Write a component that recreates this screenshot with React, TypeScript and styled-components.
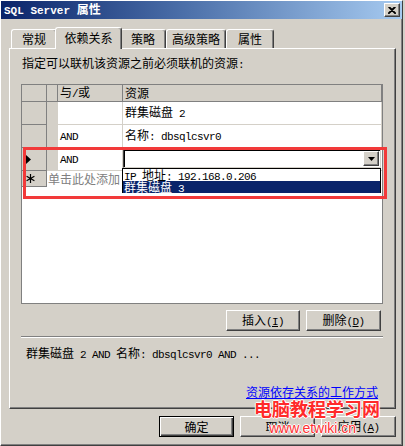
import React from 'react';
import styled, { createGlobalStyle } from 'styled-components';

const GlobalStyle = createGlobalStyle`
  html, body {
    margin: 0;
    padding: 0;
    background: #d4d0c8;
  }
  body {
    font-family: "Noto Sans CJK SC", "Liberation Sans", sans-serif;
    font-size: 12px;
    color: #000;
  }
  * {
    box-sizing: border-box;
  }
`;

const Window = styled.div`
  position: relative;
  width: 403px;
  height: 446px;
  display: flex;
  flex-direction: column;
  background: #d4d0c8;
  border-top: 1px solid #fff;
  border-left: 1px solid #fff;
  border-right: 1px solid #404040;
  border-bottom: 1px solid #404040;
  box-shadow: inset -1px -1px #808080;
`;

const TitleBar = styled.div`
  height: 18px;
  display: flex;
  align-items: center;
  justify-content: space-between;
  padding: 0 2px 0 3px;
  background: linear-gradient(90deg, #0a246a 0%, #4a6ea8 45%, #a6caf0 100%);
  color: #fff;
  font-weight: bold;
  line-height: 16px;
`;

const TitleText = styled.div`
  font-size: 12px;
  font-weight: bold;
  white-space: pre;
`;

const TitleLat = styled.span`
  font-family: "Liberation Mono", "DejaVu Sans Mono", monospace;
  font-size: 11px;
  font-weight: bold;
`;

const CloseButton = styled.div`
  width: 16px;
  height: 14px;
  display: flex;
  align-items: center;
  justify-content: center;
  background: #d4d0c8;
  border-top: 1px solid #fff;
  border-left: 1px solid #fff;
  border-right: 1px solid #404040;
  border-bottom: 1px solid #404040;
  box-shadow: inset -1px -1px #808080;
`;

const Body = styled.div`
  flex: 1;
  display: flex;
  flex-direction: column;
  padding: 8px 6px 0 8px;
`;

const TabRow = styled.div`
  height: 21px;
  display: flex;
  align-items: flex-end;
  padding-left: 2px;
`;

const Tab = styled.div<{ $w: number; $active?: boolean }>`
  position: relative;
  z-index: ${(p) => (p.$active ? 1 : 0)};
  width: ${(p) => (p.$active ? p.$w + 4 : p.$w)}px;
  height: ${(p) => (p.$active ? 22 : 19)}px;
  margin: ${(p) => (p.$active ? '0 -2px -1px' : '0')};
  display: flex;
  justify-content: center;
  align-items: center;
  padding-bottom: ${(p) => (p.$active ? 2 : 0)}px;
  background: #d4d0c8;
  border-top: 1px solid #fff;
  border-left: 1px solid #fff;
  border-right: 1px solid #404040;
  border-radius: 3px 3px 0 0;
  box-shadow: inset -1px 0 #808080;
  line-height: 14px;
  white-space: nowrap;
`;

const Panel = styled.div`
  height: 361px;
  display: flex;
  flex-direction: column;
  padding: 7px 12px 0 11px;
  border-top: 1px solid #fff;
  border-left: 1px solid #fff;
  border-right: 1px solid #404040;
  border-bottom: 1px solid #404040;
  box-shadow: inset -1px -1px #808080;
`;

const Label = styled.div`
  height: 14px;
  line-height: 14px;
  padding-left: 1px;
  white-space: pre;
`;

const Lat = styled.span`
  font-family: "Liberation Mono", "DejaVu Sans Mono", monospace;
  font-size: 11px;
  letter-spacing: -0.6px;
`;

const Grid = styled.div`
  position: relative;
  margin-top: 14px;
  height: 220px;
  border: 1px solid #808080;
  background: #fff;
`;

const Row = styled.div<{ $h: number }>`
  display: flex;
  height: ${(p) => p.$h}px;
`;

const RowHead = styled.div`
  width: 25px;
  flex: none;
  display: flex;
  align-items: center;
  padding-left: 4px;
  background: #d4d0c8;
  border-right: 1px solid #808080;
  border-bottom: 1px solid #808080;
`;

const Strip = styled.div<{ $head?: boolean }>`
  width: 11px;
  flex: none;
  background: #d4d0c8;
  ${(p) => p.$head && 'border-right: 1px solid #808080; border-bottom: 1px solid #808080;'}
`;

const Cell = styled.div<{ $w?: number; $head?: boolean }>`
  position: relative;
  ${(p) => (p.$w ? `width: ${p.$w}px; flex: none;` : 'flex: 1;')}
  display: flex;
  align-items: center;
  padding-left: 2px;
  background: ${(p) => (p.$head ? '#d4d0c8' : '#fff')};
  border-bottom: 1px solid ${(p) => (p.$head ? '#808080' : '#d4d0c8')};
  border-right: 1px solid ${(p) => (p.$head ? '#808080' : '#d4d0c8')};
  line-height: 14px;
  white-space: pre;
`;

const NewCell = styled.div`
  flex: 1;
  display: flex;
  align-items: center;
  padding-left: 1px;
  color: #808080;
  line-height: 14px;
  white-space: nowrap;
`;

const ComboCell = styled.div`
  position: relative;
  flex: 1;
  padding-top: 1px;
  background: #fff;
  border-bottom: 1px solid #d4d0c8;
`;

const Combo = styled.div`
  width: 258px;
  height: 19px;
  display: flex;
  justify-content: flex-end;
  align-items: center;
  padding-right: 1px;
  background: #fff;
  border-top: 1px solid #404040;
  border-left: 1px solid #404040;
  border-right: 1px solid #d4d0c8;
  border-bottom: 1px solid #d4d0c8;
  box-shadow: inset 1px 1px #000;
`;

const ComboButton = styled.div`
  width: 16px;
  height: 15px;
  display: flex;
  align-items: center;
  justify-content: center;
  background: #d4d0c8;
  border-top: 1px solid #fff;
  border-left: 1px solid #fff;
  border-right: 1px solid #404040;
  border-bottom: 1px solid #404040;
  box-shadow: inset -1px -1px #808080;
`;

const DropList = styled.div`
  position: absolute;
  z-index: 2;
  left: -1px;
  top: 20px;
  width: 259px;
  height: 25px;
  background: #fff;
  border: 1px solid #000;
`;

const DropItem = styled.div<{ $selected?: boolean }>`
  height: 12px;
  line-height: 12px;
  padding-left: 1px;
  white-space: pre;
  background: ${(p) => (p.$selected ? '#0a246a' : '#fff')};
  color: ${(p) => (p.$selected ? '#fff' : '#000')};
`;

const RedFrame = styled.div`
  position: absolute;
  z-index: 3;
  left: 1px;
  top: 62px;
  width: 364px;
  height: 52px;
  border: 3px solid #f23a3a;
  pointer-events: none;
`;

const ButtonRow = styled.div<{ $top: number; $right: number }>`
  display: flex;
  justify-content: flex-end;
  gap: 6px;
  margin-top: ${(p) => p.$top}px;
  padding-right: ${(p) => p.$right}px;
`;

const Button = styled.button<{ $w: number; $default?: boolean }>`
  width: ${(p) => p.$w}px;
  height: 21px;
  padding: 0;
  background: #d4d0c8;
  color: #000;
  font-family: "Noto Sans CJK SC", sans-serif;
  font-size: 12px;
  line-height: 14px;
  white-space: nowrap;
  border: 1px solid;
  border-color: ${(p) => (p.$default ? '#000' : '#fff #404040 #404040 #fff')};
  box-shadow: ${(p) =>
    p.$default
      ? 'inset 1px 1px #fff, inset -1px -1px #404040, inset -2px -2px #808080'
      : 'inset -1px -1px #808080'};
`;

const Separator = styled.div`
  margin-top: 5px;
  height: 2px;
  border-top: 1px solid #808080;
  border-bottom: 1px solid #fff;
`;

const Summary = styled.div`
  margin-top: 8px;
  padding-left: 5px;
  height: 14px;
  line-height: 14px;
  white-space: pre;
`;

const HelpLink = styled.a`
  align-self: flex-end;
  margin-top: 25px;
  margin-right: 5px;
  line-height: 14px;
  color: #0000ff;
  text-decoration: underline;
  white-space: nowrap;
`;

const Watermark = styled.div`
  position: absolute;
  z-index: 5;
  left: 253px;
  top: 396px;
  display: flex;
  flex-direction: column;
  pointer-events: none;
`;

const MarkTitle = styled.div`
  font-family: "Noto Sans CJK SC", sans-serif;
  font-size: 18px;
  font-weight: bold;
  line-height: 22px;
  color: #ff2a2a;
  white-space: nowrap;
  text-shadow: 1px 0 #fff, -1px 0 #fff, 0 1px #fff, 0 -1px #fff;
`;

const MarkUrl = styled.div`
  margin-left: 15px;
  font-family: "Liberation Sans", Arial, sans-serif;
  font-size: 14px;
  line-height: 18px;
  color: #ff3030;
  white-space: nowrap;
  text-shadow: 1px 0 #fff, -1px 0 #fff, 0 1px #fff, 0 -1px #fff;
`;

/** ascii 부분만 좁은 고정폭 글꼴로 (span 으로 감싸서 flex 안에서도 공백 유지) */
function mix(s: string) {
  const parts = s.match(/[\x00-\x7f]+|[^\x00-\x7f]+/g) || [];
  return (
    <span>
      {parts.map((p, i) =>
        /^[\x00-\x7f]/.test(p) ? <Lat key={i}>{p}</Lat> : <React.Fragment key={i}>{p}</React.Fragment>,
      )}
    </span>
  );
}

const tabs = [
  { name: '常规', w: 46 },
  { name: '依赖关系', w: 63, active: true },
  { name: '策略', w: 46 },
  { name: '高级策略', w: 60 },
  { name: '属性', w: 48 },
];

export default function App() {
  return (
    <>
      <GlobalStyle />
      <Window>
        <TitleBar>
          <TitleText>
            <TitleLat>SQL Server </TitleLat>属性
          </TitleText>
          <CloseButton>
            <svg width="8" height="7" viewBox="0 0 8 7">
              <path d="M0.5 0 L7.5 7 M1.5 0 L8 6.5 M7.5 0 L0.5 7 M6.5 0 L0 6.5" stroke="#000" strokeWidth="1.2" />
            </svg>
          </CloseButton>
        </TitleBar>

        <Body>
          <TabRow>
            {tabs.map((t) => (
              <Tab key={t.name} $w={t.w} $active={t.active}>
                {t.name}
              </Tab>
            ))}
          </TabRow>

          <Panel>
            <Label>{mix('指定可以联机该资源之前必须联机的资源:')}</Label>

            <Grid>
              <Row $h={17}>
                <RowHead />
                <Strip $head />
                <Cell $w={65} $head>
                  {mix('与/或')}
                </Cell>
                <Cell $head>资源</Cell>
              </Row>
              <Row $h={23}>
                <RowHead />
                <Strip />
                <Cell $w={65} />
                <Cell>{mix('群集磁盘 2')}</Cell>
              </Row>
              <Row $h={23}>
                <RowHead />
                <Strip />
                <Cell $w={65}>{mix('AND')}</Cell>
                <Cell>{mix('名称: dbsqlcsvr0')}</Cell>
              </Row>
              <Row $h={23}>
                <RowHead>
                  <svg width="5" height="9" viewBox="0 0 5 9">
                    <path d="M0 0 L5 4.5 L0 9 Z" fill="#000" />
                  </svg>
                </RowHead>
                <Strip />
                <Cell $w={65}>{mix('AND')}</Cell>
                <ComboCell>
                  <Combo>
                    <ComboButton>
                      <svg width="7" height="4" viewBox="0 0 7 4">
                        <path d="M0 0 L7 0 L3.5 4 Z" fill="#000" />
                      </svg>
                    </ComboButton>
                  </Combo>
                  <DropList>
                    <DropItem>{mix('IP 地址: 192.168.0.206')}</DropItem>
                    <DropItem $selected>{mix('群集磁盘 3')}</DropItem>
                  </DropList>
                </ComboCell>
              </Row>
              <Row $h={16}>
                <RowHead>
                  <svg width="9" height="9" viewBox="0 0 9 9">
                    <path d="M4.5 0 V9 M0.6 2.2 L8.4 6.8 M0.6 6.8 L8.4 2.2" stroke="#000" strokeWidth="1.2" />
                  </svg>
                </RowHead>
                <NewCell>单击此处添加</NewCell>
              </Row>
              <RedFrame />
            </Grid>

            <ButtonRow $top={6} $right={2}>
              <Button $w={74}>
                插入<Lat>(</Lat>
                <u><Lat>I</Lat></u>
                <Lat>)</Lat>
              </Button>
              <Button $w={75}>
                删除<Lat>(</Lat>
                <u><Lat>D</Lat></u>
                <Lat>)</Lat>
              </Button>
            </ButtonRow>

            <Separator />
            <Summary>{mix('群集磁盘 2 AND 名称: dbsqlcsvr0 AND ...')}</Summary>
            <HelpLink>资源依存关系的工作方式</HelpLink>
          </Panel>

          <ButtonRow $top={7} $right={0}>
            <Button $w={75} $default>
              确定
            </Button>
            <Button $w={75}>取消</Button>
            <Button $w={75}>
              应用<Lat>(</Lat>
              <u><Lat>A</Lat></u>
              <Lat>)</Lat>
            </Button>
          </ButtonRow>
        </Body>

        <Watermark>
          <MarkTitle>电脑教程学习网</MarkTitle>
          <MarkUrl>www.etwiki.cn</MarkUrl>
        </Watermark>
      </Window>
    </>
  );
}
